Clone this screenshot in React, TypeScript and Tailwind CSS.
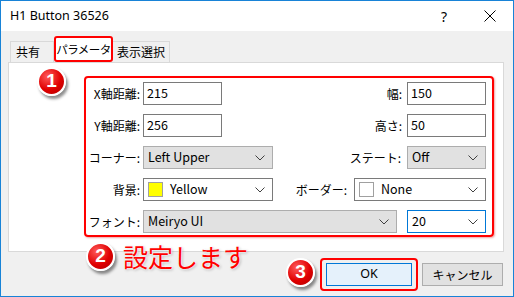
import React from "react";

const Chevron = () => (
  <svg width="10" height="6" viewBox="0 0 10 6" className="shrink-0">
    <polyline points="0.5,0.5 5,5 9.5,0.5" fill="none" stroke="#404040" strokeWidth="1" />
  </svg>
);

function TextBox({ value, w }: { value: string; w: string }) {
  return (
    <div className={`${w} h-[23px] bg-white border border-[#7a7a7a] flex items-center pl-[3px] text-[12.5px] text-black`}>
      {value}
    </div>
  );
}

function Combo({ value, w, swatch, white, focus }: { value: string; w: string; swatch?: string; white?: boolean; focus?: boolean }) {
  const tone = focus
    ? "bg-white border-[#0078d7]"
    : white
    ? "bg-white border-[#7a7a7a]"
    : "bg-[#e1e1e1] border-[#adadad]";
  return (
    <div className={`${w} h-[23px] border ${tone} flex items-center pl-[4px] pr-[7px] text-[12.5px] text-black`}>
      {swatch && <div className="w-[15px] h-[15px] border border-[#a0a0a0] mr-[7px] shrink-0" style={{ background: swatch }} />}
      <span className="flex-1">{value}</span>
      <Chevron />
    </div>
  );
}

function Badge({ n, className }: { n: string; className: string }) {
  return (
    <div
      className={`absolute w-[29px] h-[29px] rounded-full border-2 border-white bg-[radial-gradient(circle_at_35%_30%,#ff5a5a,#e00000_55%,#b00000)] shadow-[2px_3px_3px_rgba(0,0,0,0.45)] flex items-center justify-center text-white font-bold text-[19px] font-['Liberation_Sans',sans-serif] ${className}`}
    >
      {n}
    </div>
  );
}

export default function App() {
  return (
    <div className="w-[514px] h-[297px] relative overflow-hidden border border-[#1883d7] bg-[#f0f0f0] flex flex-col font-['Noto_Sans','Noto_Sans_CJK_JP',sans-serif] text-[12px] text-black">
      {/* title bar */}
      <div className="h-[30px] bg-white flex items-center pl-[9px]">
        <span className="text-[12.5px] flex-1">H1 Button 36526</span>
        <span className="text-[14px] mr-[37px]">?</span>
        <svg width="12" height="12" viewBox="0 0 12 12" className="mr-[17px]">
          <path d="M0.5 0.5 L11.5 11.5 M11.5 0.5 L0.5 11.5" stroke="#000" strokeWidth="1" />
        </svg>
      </div>

      <div className="flex flex-col pl-[7px] pr-[9px] pt-[5px]">
        {/* tabs */}
        <div className="flex items-end h-[26px] pl-[2px] font-['Noto_Sans_CJK_JP',sans-serif] whitespace-nowrap">
          <div className="w-[44px] h-[21px] border border-b-0 border-[#d9d9d9] flex items-center pl-[5px]">共有</div>
          <div className="w-[59px] h-[26px] border-2 border-[#ff0000] rounded-[3px] bg-white flex items-center justify-center z-10 text-[11.5px] tracking-[-0.5px] pt-[2px]">パラメータ</div>
          <div className="w-[57px] h-[21px] border border-b-0 border-l-0 border-[#d9d9d9] flex items-center pl-[4px]">表示選択</div>
        </div>

        {/* panel */}
        <div className="h-[190px] bg-white border border-[#d9d9d9] pl-[75px] pr-[9px] pt-[13px]">
          <div className="border-2 border-[#ff0000] rounded-[4px] shadow-[1px_1px_2px_rgba(200,0,0,0.35)] flex flex-col gap-[9px] pt-[4px] pb-[2px] pr-[6px] font-['Noto_Sans_CJK_JP',sans-serif] whitespace-nowrap">
            <div className="flex items-center h-[23px]">
              <span className="w-[57px] pr-[3px] text-right">X軸距離:</span>
              <TextBox value="215" w="w-[79px]" />
              <div className="ml-auto flex items-center gap-[5px]">
                <span>幅:</span>
                <TextBox value="150" w="w-[79px]" />
              </div>
            </div>
            <div className="flex items-center h-[23px]">
              <span className="w-[57px] pr-[3px] text-right">Y軸距離:</span>
              <TextBox value="256" w="w-[79px]" />
              <div className="ml-auto flex items-center gap-[5px]">
                <span>高さ:</span>
                <TextBox value="50" w="w-[79px]" />
              </div>
            </div>
            <div className="flex items-center h-[23px]">
              <span className="w-[57px] pr-[3px] text-right">コーナー:</span>
              <Combo value="Left Upper" w="w-[130px]" />
              <div className="ml-auto flex items-center gap-[6px]">
                <span>ステート:</span>
                <Combo value="Off" w="w-[79px]" />
              </div>
            </div>
            <div className="flex items-center h-[23px]">
              <span className="w-[57px] pr-[3px] text-right">背景:</span>
              <Combo value="Yellow" w="w-[130px]" swatch="#ffff00" white />
              <div className="ml-auto flex items-center gap-[7px]">
                <span>ボーダー:</span>
                <Combo value="None" w="w-[132px]" swatch="#ffffff" white />
              </div>
            </div>
            <div className="flex items-center h-[23px]">
              <span className="w-[57px] pr-[3px] text-right">フォント:</span>
              <Combo value="Meiryo UI" w="w-[254px]" />
              <div className="ml-auto">
                <Combo value="20" w="w-[79px]" focus />
              </div>
            </div>
          </div>
        </div>

        {/* buttons */}
        <div className="flex justify-end items-center mt-[6px] pr-[1px]">
          <div className="border-2 border-[#ff0000] rounded-[4px] px-[4px] py-[3px] mr-[4px]">
            <button className="w-[86px] h-[23px] bg-[#e5f1fb] border border-[#0078d7] text-[12.5px]">OK</button>
          </div>
          <button className="w-[81px] h-[23px] bg-[#e1e1e1] border border-[#adadad] font-['Noto_Sans_CJK_JP',sans-serif]">キャンセル</button>
        </div>
      </div>

      {/* annotations */}
      <Badge n="1" className="left-[36px] top-[66px]" />
      <Badge n="2" className="left-[85px] top-[241px]" />
      <Badge n="3" className="left-[285px] top-[257px]" />
      <span className="absolute left-[122px] top-[240px] text-[25px] leading-[30px] text-[#ff0000] font-['Noto_Sans_CJK_JP',sans-serif] [text-shadow:0_0_2px_#fff,0_0_2px_#fff,1px_1px_3px_rgba(0,0,0,0.3)]">
        設定します
      </span>
    </div>
  );
}
